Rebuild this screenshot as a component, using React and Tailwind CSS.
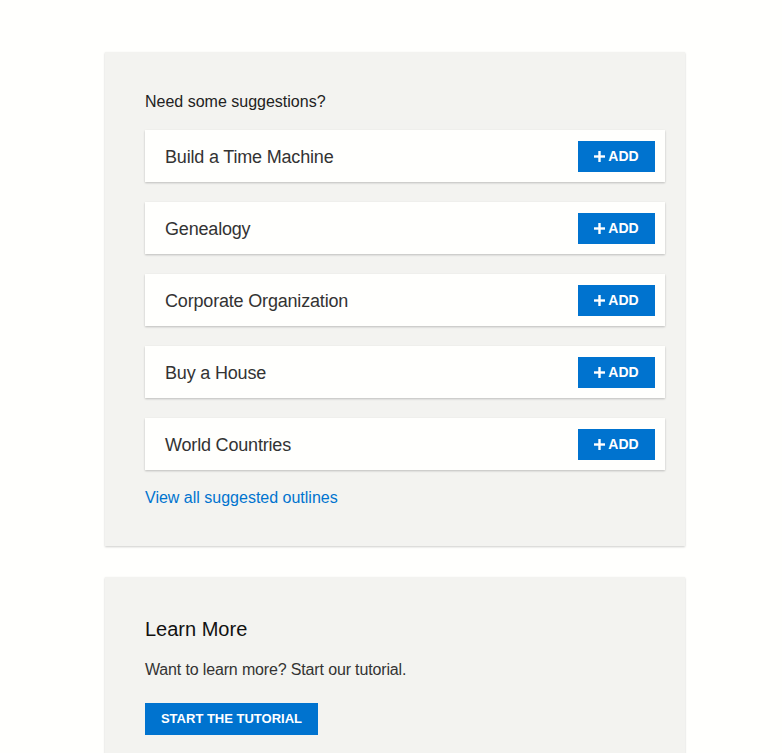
import React from 'react';

const suggestions = [
    'Build a Time Machine',
    'Genealogy',
    'Corporate Organization',
    'Buy a House',
    'World Countries',
];

const PlusIcon = () => (
    <svg width="11" height="11" viewBox="0 0 11 11" className="mr-[3px]">
        <rect x="4.3" y="0" width="2.4" height="11" fill="currentColor" />
        <rect x="0" y="4.3" width="11" height="2.4" fill="currentColor" />
    </svg>
);

const SuggestionRow = ({ title }) => (
    <div className="flex items-center justify-between h-[52px] bg-[#fffffd] pl-5 pr-[10px] shadow-[0_1px_2px_rgba(0,0,0,0.22)]">
        <span className="pt-[2px] text-[18px] tracking-[-0.18px] text-[#333333]">{title}</span>
        <button className="flex items-center justify-center w-[77px] h-[31px] bg-[#0073cf] text-white text-[14px] font-bold">
            <PlusIcon />
            <span>ADD</span>
        </button>
    </div>
);

export default function App() {
    return (
        <div
            className="min-h-[753px] bg-[#fffffd] pt-[52px] pl-[105px]"
            style={{ fontFamily: '"Liberation Sans", Arial, sans-serif' }}
        >
            {/* suggestions panel */}
            <div className="w-[580px] bg-[#f3f3f0] pt-[41px] pb-[39px] pl-10 pr-5 shadow-[0_1px_2px_rgba(0,0,0,0.2)]">
                <p className="text-[16px] leading-[18px] text-[#222222]">Need some suggestions?</p>
                <div className="mt-[19px] flex flex-col gap-5">
                    {suggestions.map((s) => (
                        <SuggestionRow key={s} title={s} />
                    ))}
                </div>
                <a href="#" className="block mt-[19px] text-[16px] leading-[18px] text-[#0073cf]">
                    View all suggested outlines
                </a>
            </div>

            {/* learn more panel */}
            <div className="mt-[31px] w-[580px] bg-[#f3f3f0] pt-10 pb-10 pl-10 pr-5 shadow-[0_1px_2px_rgba(0,0,0,0.2)]">
                <h2 className="text-[20px] leading-[24px] text-[#111111]">Learn More</h2>
                <p className="mt-5 text-[16px] leading-[18px] tracking-[-0.15px] text-[#333333]">
                    Want to learn more? Start our tutorial.
                </p>
                <button className="mt-6 w-[173px] h-[32px] bg-[#0073cf] text-white text-[13px] font-bold">
                    START THE TUTORIAL
                </button>
            </div>
        </div>
    );
}
